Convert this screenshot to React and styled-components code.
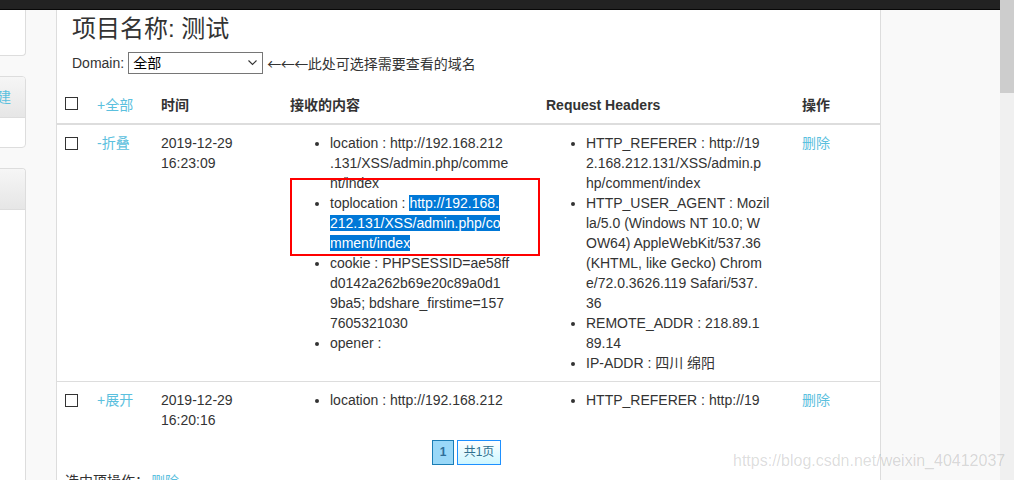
import React from "react";
import styled, { createGlobalStyle } from "styled-components";

const GlobalStyle = createGlobalStyle`
  html, body {
    margin: 0;
    padding: 0;
    height: 100%;
    overflow: hidden;
  }
  body {
    background: #f9f9f9;
    font-family: "Liberation Sans", Arial, "Noto Sans CJK SC", sans-serif;
    font-size: 14px;
    color: #333;
  }
  #root {
    height: 100%;
  }
`;

const Page = styled.div`
  display: flex;
  height: 480px;
  overflow: hidden;
`;

const Viewport = styled.div`
  position: relative;
  width: 1000px;
  flex-shrink: 0;
  display: flex;
  flex-direction: column;
`;

const TopBar = styled.div`
  flex-shrink: 0;
  height: 9px;
  background: #222;
  border-bottom: 1px solid #080808;
`;

const Body = styled.div`
  flex: 1;
  min-height: 0;
  display: flex;
  gap: 30px;
`;

const Sidebar = styled.div`
  width: 26px;
  flex-shrink: 0;
  display: flex;
  flex-direction: column;
  align-items: flex-end;
  gap: 20px;
  overflow: hidden;
`;

const SidePanel = styled.div`
  width: 160px;
  flex-shrink: 0;
  box-sizing: border-box;
  background: #fff;
  border: 1px solid #ddd;
  border-radius: 4px;
  overflow: hidden;
  ${(p) => p.$first && "border-top: 0; border-radius: 0 0 4px 4px;"}
  ${(p) => p.$grow && "flex: 1; border-bottom: 0; border-radius: 4px 4px 0 0;"}
`;

const SideHead = styled.div`
  height: 40px;
  line-height: 40px;
  padding-right: 14px;
  text-align: right;
  color: #5bc0de;
  background: linear-gradient(#f6f6f6, #e6e6e6);
  border-bottom: 1px solid #ddd;
`;

const SideBody = styled.div`
  height: ${(p) => p.$h}px;
`;

const Main = styled.div`
  width: 823px;
  flex-shrink: 0;
  background: #fff;
  border-left: 1px solid #ddd;
  border-right: 1px solid #ddd;
  padding-top: 4px;
`;

const Title = styled.h1`
  margin: 0 15px;
  font-size: 24px;
  font-weight: normal;
  line-height: 30px;
  color: #333;
`;

const DomainRow = styled.div`
  display: flex;
  align-items: center;
  gap: 4px;
  height: 22px;
  margin: 8px 15px 0;
`;

const Hint = styled.span`
  font-family: "Noto Sans CJK SC", sans-serif;
  letter-spacing: -0.5px;
`;

const HintText = styled.span`
  letter-spacing: 0;
`;

const SelectWrap = styled.div`
  position: relative;
  width: 135px;
  height: 22px;
`;

const Select = styled.select`
  appearance: none;
  width: 100%;
  height: 100%;
  margin: 0;
  padding: 0 0 0 4px;
  box-sizing: border-box;
  border: 1px solid #767676;
  border-radius: 0;
  background: #fff;
  color: #000;
  font-family: "Liberation Sans", "Noto Sans CJK SC", sans-serif;
  font-size: 14px;
`;

const Chevron = styled.svg`
  position: absolute;
  right: 6px;
  top: 8px;
  pointer-events: none;
`;

const Table = styled.table`
  width: 100%;
  margin-top: 13px;
  border-collapse: collapse;
  table-layout: fixed;
`;

const Th = styled.th`
  padding: 8px;
  text-align: left;
  vertical-align: top;
  line-height: 20px;
  font-weight: ${(p) => (p.$plain ? "normal" : "bold")};
  border-bottom: 2px solid #ddd;
`;

const Td = styled.td`
  padding: 8px;
  vertical-align: top;
  line-height: 20px;
  border-top: 1px solid #ddd;
`;

const Check = styled.input.attrs({ type: "checkbox" })`
  appearance: none;
  display: block;
  width: 13px;
  height: 13px;
  margin: ${(p) => (p.$head ? "2px" : "4px")} 0 0;
  border: 1px solid #333;
  border-radius: 0;
  background: #fff;
`;

const Link = styled.a`
  color: #5bc0de;
  text-decoration: none;
  cursor: pointer;
  margin-left: ${(p) => p.$gap || 0}px;
`;

const Cell = styled.div`
  position: relative;
`;

const List = styled.ul`
  margin: 0;
  padding-left: 40px;
  ${(p) => p.$collapsed && "height: 20px; overflow: hidden;"}
`;

const Item = styled.li`
  white-space: nowrap;
`;

const Line = styled.span`
  display: block;
`;

const Selected = styled.span`
  background: #0078d7;
  color: #fff;
`;

const Callout = styled.div`
  position: absolute;
  left: 0;
  top: 45px;
  width: 250px;
  height: 78px;
  box-sizing: border-box;
  border: 2px solid #f00;
  pointer-events: none;
`;

const Pager = styled.div`
  display: flex;
  justify-content: center;
  gap: 3px;
  margin-top: 2px;
  padding-right: 4px;
`;

const PageBox = styled.span`
  box-sizing: border-box;
  height: 25px;
  min-width: ${(p) => (p.$current ? 22 : 44)}px;
  line-height: 23px;
  text-align: center;
  font-size: 12px;
  ${(p) =>
    p.$current
      ? "background: #99d8f8; border: 1px solid #1b7db5; color: #2f6e98; font-weight: bold;"
      : "background: linear-gradient(#fff, #cdf6ff); border: 1px solid #1e90ff; color: #31708f;"}
`;

const Footer = styled.div`
  margin-top: 6px;
  padding-left: 8px;
  line-height: 20px;
`;

const Watermark = styled.div`
  position: absolute;
  left: 733px;
  top: 452px;
  font-family: "Liberation Sans", Arial, sans-serif;
  font-size: 16px;
  line-height: 18px;
  color: rgba(0, 0, 0, 0.15);
  white-space: nowrap;
  pointer-events: none;
`;

const Scrollbar = styled.div`
  width: 14px;
  flex-shrink: 0;
  background: #f0f0f0;
`;

const Thumb = styled.div`
  height: 93px;
  background: #cdcdcd;
`;

const rows = [
  {
    toggle: "-折叠",
    date: "2019-12-29",
    time: "16:23:09",
    collapsed: false,
    content: [
      { lines: ["location : http://192.168.212", ".131/XSS/admin.php/comme", "nt/index"] },
      {
        lines: [
          { plain: "toplocation : ", sel: "http://192.168." },
          { sel: "212.131/XSS/admin.php/co" },
          { sel: "mment/index" },
        ],
      },
      {
        lines: [
          "cookie : PHPSESSID=ae58ff",
          "d0142a262b69e20c89a0d1",
          "9ba5; bdshare_firstime=157",
          "7605321030",
        ],
      },
      { lines: ["opener : "] },
    ],
    headers: [
      { lines: ["HTTP_REFERER : http://19", "2.168.212.131/XSS/admin.p", "hp/comment/index"] },
      {
        lines: [
          "HTTP_USER_AGENT : Mozil",
          "la/5.0 (Windows NT 10.0; W",
          "OW64) AppleWebKit/537.36",
          "(KHTML, like Gecko) Chrom",
          "e/72.0.3626.119 Safari/537.",
          "36",
        ],
      },
      { lines: ["REMOTE_ADDR : 218.89.1", "89.14"] },
      { lines: ["IP-ADDR : 四川 绵阳"] },
    ],
    marked: true,
  },
  {
    toggle: "+展开",
    date: "2019-12-29",
    time: "16:20:16",
    collapsed: true,
    content: [{ lines: ["location : http://192.168.212", ".131/XSS/admin.php/comme", "nt/index"] }],
    headers: [{ lines: ["HTTP_REFERER : http://19", "2.168.212.131/XSS/admin.p", "hp/comment/index"] }],
  },
];

function Lines({ lines }) {
  return lines.map((l, i) =>
    typeof l === "string" ? (
      <Line key={i}>{l}</Line>
    ) : (
      <Line key={i}>
        {l.plain}
        <Selected>{l.sel}</Selected>
      </Line>
    )
  );
}

function DataList({ items, collapsed }) {
  return (
    <List $collapsed={collapsed}>
      {items.map((it, i) => (
        <Item key={i}>
          <Lines lines={it.lines} />
        </Item>
      ))}
    </List>
  );
}

export default function App() {
  return (
    <>
      <GlobalStyle />
      <Page>
        <Viewport>
          <TopBar />
          <Body>
            <Sidebar>
              <SidePanel $first>
                <SideBody $h={45} />
              </SidePanel>
              <SidePanel>
                <SideHead>新建</SideHead>
                <SideBody $h={29} />
              </SidePanel>
              <SidePanel $grow>
                <SideHead />
              </SidePanel>
            </Sidebar>

            <Main>
              <Title>项目名称: 测试</Title>
              <DomainRow>
                <span>Domain:</span>
                <SelectWrap>
                  <Select defaultValue="all">
                    <option value="all">全部</option>
                  </Select>
                  <Chevron width="9" height="6" viewBox="0 0 9 6">
                    <polyline points="0.5,0.5 4.5,4.5 8.5,0.5" fill="none" stroke="#333" strokeWidth="1.1" />
                  </Chevron>
                </SelectWrap>
                <Hint>
                  ←←←<HintText>此处可选择需要查看的域名</HintText>
                </Hint>
              </DomainRow>

              <Table>
                <colgroup>
                  <col style={{ width: 32 }} />
                  <col style={{ width: 64 }} />
                  <col style={{ width: 129 }} />
                  <col style={{ width: 256 }} />
                  <col style={{ width: 256 }} />
                  <col />
                </colgroup>
                <thead>
                  <tr>
                    <Th>
                      <Check $head />
                    </Th>
                    <Th $plain>
                      <Link>+全部</Link>
                    </Th>
                    <Th>时间</Th>
                    <Th>接收的内容</Th>
                    <Th>Request Headers</Th>
                    <Th>操作</Th>
                  </tr>
                </thead>
                <tbody>
                  {rows.map((r, i) => (
                    <tr key={i}>
                      <Td>
                        <Check />
                      </Td>
                      <Td>
                        <Link>{r.toggle}</Link>
                      </Td>
                      <Td>
                        {r.date}
                        <br />
                        {r.time}
                      </Td>
                      <Td>
                        <Cell>
                          <DataList items={r.content} collapsed={r.collapsed} />
                          {r.marked && <Callout />}
                        </Cell>
                      </Td>
                      <Td>
                        <DataList items={r.headers} collapsed={r.collapsed} />
                      </Td>
                      <Td>
                        <Link>删除</Link>
                      </Td>
                    </tr>
                  ))}
                </tbody>
              </Table>

              <Pager>
                <PageBox $current>1</PageBox>
                <PageBox>共1页</PageBox>
              </Pager>

              <Footer>
                选中项操作：<Link $gap={2}>删除</Link>
              </Footer>
            </Main>
          </Body>
          <Watermark>https://blog.csdn.net/weixin_40412037</Watermark>
        </Viewport>
        <Scrollbar>
          <Thumb />
        </Scrollbar>
      </Page>
    </>
  );
}
